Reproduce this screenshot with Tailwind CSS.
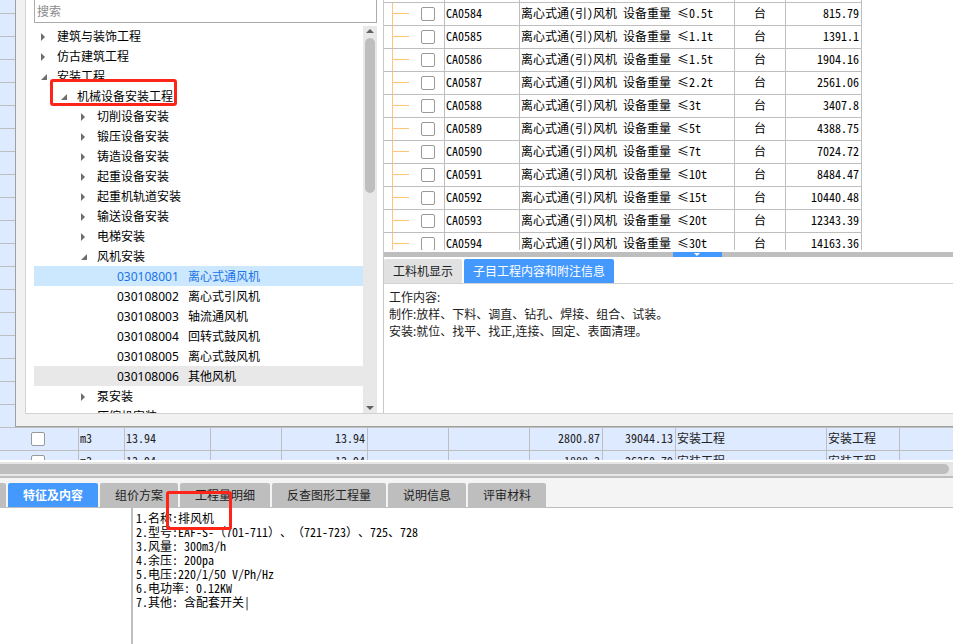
<!DOCTYPE html>
<html lang="zh-CN">
<head>
<meta charset="utf-8">
<title>安装工程清单</title>
<script src="https://cdn.jsdelivr.net/npm/@tailwindcss/browser@4"></script>
</head>
<body class="h-screen flex flex-col overflow-hidden bg-white text-black text-[12px] font-['Noto_Sans','Noto_Sans_CJK_SC',sans-serif]">

<main class="flex-1 min-h-0 flex">
  <div id="stripe" class="w-[15px] flex-none overflow-hidden bg-[#deeaff]"></div>
  <section class="flex-1 min-w-0 flex flex-col bg-[#f1f1f1] border-l border-b border-[#a0a0a0] pl-[9px] pb-[12px]">
    <div class="flex-1 min-h-0 flex bg-white border-l border-b border-[#d2d2d2]">
      <div class="relative w-[357px] flex-none flex flex-col pl-[8px] pr-[6px]">
        <input type="text" aria-label="搜索" placeholder="搜索" class="h-[23px] flex-none w-full border border-t-0 border-[#ababab] px-[2px] leading-[22px] outline-none placeholder:text-[#8a8a8a]">
        <div class="flex-1 min-h-0 flex pt-[3px]">
          <ul id="tree" class="flex-1 min-w-0 overflow-hidden"></ul>
          <div class="w-[14px] flex-none bg-[#e8e8e8] flex flex-col items-center justify-between pt-[3px] pb-[3px]">
            <div class="flex flex-col items-center">
              <svg class="w-[8px] h-[4px]" viewBox="0 0 8 4"><path d="M0 4 4 0 8 4z" fill="#606068"/></svg>
              <div class="mt-[5px] w-[10px] h-[155px] rounded-full bg-[#bebebe]"></div>
            </div>
            <svg class="w-[8px] h-[4px]" viewBox="0 0 8 4"><path d="M0 0 4 4 8 0z" fill="#606068"/></svg>
          </div>
        </div>
        <div class="absolute left-[24px] top-[79px] w-[127px] h-[27px] border-3 border-[#ff2418] rounded-[3px]"></div>
      </div>
      <div class="flex-1 min-w-0 flex flex-col border-l border-[#c8c8c8]">
        <div class="flex-1 min-h-0 overflow-hidden">
          <table class="w-[478px] table-fixed border-separate border-spacing-0 font-['Noto_Sans_Mono_CJK_SC','Noto_Sans_CJK_SC',monospace]">
            <colgroup><col class="w-[61px]"><col class="w-[75px]"><col class="w-[215px]"><col class="w-[51px]"><col class="w-[76px]"></colgroup>
            <tbody id="quota"></tbody>
          </table>
        </div>
        <div class="mt-[2px] h-[5px] flex-none bg-[#bebebe] flex justify-center">
          <button aria-label="折叠" class="w-[49px] mr-[-57px] bg-[#4499ff] flex justify-center items-center"><svg class="w-[6px] h-[3px]" viewBox="0 0 6 3"><path d="M0 0 3 3 6 0z" fill="#fff"/></svg></button>
        </div>
        <div class="mt-[2px] flex-none flex gap-[2px] border-b border-[#d2d2d2] leading-[22px]">
          <button class="h-[24px] px-[9px] pt-[2px] bg-[#e1e1e1] text-[#222] rounded-t-[2px]">工料机显示</button>
          <button class="h-[24px] px-[9px] pt-[2px] bg-[#4499ff] text-white rounded-t-[2px]">子目工程内容和附注信息</button>
        </div>
        <div class="h-[129px] flex-none pt-[5px] pl-[5px] leading-[17px] text-[#222]">
          <p>工作内容:</p>
          <p>制作:放样、下料、调直、钻孔、焊接、组合、试装。</p>
          <p>安装:就位、找平、找正,连接、固定、表面清理。</p>
        </div>
      </div>
    </div>
  </section>
</main>

<div class="h-[33px] flex-none overflow-hidden bg-[#deeaff]">
  <table class="w-full table-fixed border-separate border-spacing-0 text-[#222] font-['Noto_Sans_Mono_CJK_SC','Noto_Sans_CJK_SC',monospace]">
    <colgroup><col class="w-[79px]"><col class="w-[46px]"><col class="w-[86px]"><col class="w-[71px]"><col class="w-[86px]"><col class="w-[81px]"><col class="w-[81px]"><col class="w-[73px]"><col class="w-[73px]"><col class="w-[151px]"><col class="w-[73px]"><col></colgroup>
    <tbody id="bill"></tbody>
  </table>
</div>
<div class="mt-[2px] h-[14px] flex-none bg-[#e6e6e6] pt-[2px] pb-[2px] pr-[4px]"><div class="h-full rounded-r-full bg-[#bebebe]"></div></div>

<section class="h-[168px] flex-none flex flex-col border-t-2 border-[#bebebe]">
  <div class="flex-none flex gap-[2px] pt-[5px] bg-[#f4f4f4] border-b border-[#bebebe] text-[#222] leading-[22px]">
    <div class="w-[6px] bg-[#bebebe] rounded-tr-[2px]"></div>
    <button class="h-[24px] px-[15px] pt-[2px] rounded-t-[2px] bg-[#4499ff] text-white font-bold">特征及内容</button>
    <button class="h-[24px] px-[15px] pt-[2px] rounded-t-[2px] bg-[#bebebe]">组价方案</button>
    <button class="h-[24px] px-[15px] pt-[2px] rounded-t-[2px] bg-[#bebebe]">工程量明细</button>
    <button class="h-[24px] px-[15px] pt-[2px] rounded-t-[2px] bg-[#bebebe]">反查图形工程量</button>
    <button class="h-[24px] px-[15px] pt-[2px] rounded-t-[2px] bg-[#bebebe]">说明信息</button>
    <button class="h-[24px] px-[15px] pt-[2px] rounded-t-[2px] bg-[#bebebe]">评审材料</button>
  </div>
  <div class="flex-1 min-h-0 flex">
    <div class="w-[131px] flex-none"></div>
    <div class="relative flex-1 border-l-2 border-[#bebebe] flex">
      <textarea aria-label="特征及内容" class="flex-1 resize-none outline-none overflow-hidden pt-[3px] pl-[3px] leading-[14px] text-[12px] [text-spacing-trim:space-all] font-['Noto_Sans_Mono_CJK_SC','Noto_Sans_CJK_SC',monospace]">1.名称:排风机
2.型号:EAF-S-（701-711）、（721-723）、725、728
3.风量: 300m3/h
4.余压: 200pa
5.电压:220/1/50 V/Ph/Hz
6.电功率: 0.12KW
7.其他: 含配套开关|</textarea>
      <div class="absolute left-[33px] top-[-17px] w-[66px] h-[39px] border-3 border-[#ff2418] rounded-[3px]"></div>
    </div>
  </div>
</section>

<script>
const box = label => `<input type="checkbox" aria-label="${label}" class="block appearance-none w-[14px] h-[14px] bg-white border border-[#999] rounded-[2px]">`;

document.getElementById('stripe').innerHTML =
  '<div class="h-[14px] border-b border-[#bebebe]"></div>' +
  '<div class="h-[23px] border-b border-[#bebebe]"></div>'.repeat(18);

const pads = ['pl-[6px]', 'pl-[26px]', 'pl-[46px]', 'pl-[66px]'];
const closed = '<svg class="w-[17px] h-[8px]" viewBox="0 0 17 8"><path d="M1 0 5 4 1 8z" fill="#6e6e6e"/></svg>';
const opened = '<svg class="w-[17px] h-[8px]" viewBox="0 0 17 8"><path d="M7 1v6H1z" fill="#6e6e6e"/></svg>';
const blank = '<span class="w-[17px]"></span>';
const tree = [
  [0, closed, '建筑与装饰工程'], [0, closed, '仿古建筑工程'], [0, opened, '安装工程'],
  [1, opened, '机械设备安装工程'],
  [2, closed, '切削设备安装'], [2, closed, '锻压设备安装'], [2, closed, '铸造设备安装'],
  [2, closed, '起重设备安装'], [2, closed, '起重机轨道安装'], [2, closed, '输送设备安装'],
  [2, closed, '电梯安装'], [2, opened, '风机安装'],
  [3, blank, '离心式通风机', '030108001', 'bg-[#cce8ff] text-[#1a73e8]'],
  [3, blank, '离心式引风机', '030108002'], [3, blank, '轴流通风机', '030108003'],
  [3, blank, '回转式鼓风机', '030108004'], [3, blank, '离心式鼓风机', '030108005'],
  [3, blank, '其他风机', '030108006', 'bg-[#e8e8e8]'],
  [2, closed, '泵安装'], [2, closed, '压缩机安装']
];
document.getElementById('tree').innerHTML = tree.map(([d, icon, name, code, tone]) =>
  `<li class="h-[20px] pt-[2px] leading-[18px] flex items-center whitespace-nowrap ${pads[d]} ${tone || ''}">${icon}${code ? `<span class="w-[71px]">${code}</span>` : ''}<span>${name}</span></li>`).join('');

const quota = [['84','0.5t','815.79'],['85','1.1t','1391.1'],['86','1.5t','1904.16'],['87','2.2t','2561.06'],
  ['88','3t','3407.8'],['89','5t','4388.75'],['90','7t','7024.72'],['91','10t','8484.47'],
  ['92','15t','10440.48'],['93','20t','12343.39'],['94','30t','14163.36']];
const cell = 'h-[23px] p-0 align-top border-t border-r border-[#bebebe] leading-[20px] whitespace-nowrap overflow-hidden';
document.getElementById('quota').innerHTML =
  '<tr>' + '<td class="h-[2px] p-0 border-r border-[#bebebe]"></td>'.repeat(5) + '</tr>' +
  quota.map(([n, w, p]) => `<tr>
    <td class="${cell}"><div class="flex items-start h-[22px] pl-[8px]"><span class="self-stretch w-px bg-[#ffc67a]"></span><span class="w-[16px] h-px mt-[10px] bg-[#ffc67a] mr-[12px]"></span><span class="pt-[4px]">${box('CA05' + n)}</span></div></td>
    <td class="${cell} pl-[1px]">CA05${n}</td>
    <td class="${cell} pl-[1px]">离心式通(引)风机 设备重量 ≤${w}</td>
    <td class="${cell} text-center">台</td>
    <td class="${cell} text-right pr-[2px]">${p}</td></tr>`).join('');

document.getElementById('bill').innerHTML = [
  ['m3','13.94','13.94','2800.87','39044.13'], ['m3','13.94','13.94','1888.3','26350.79']
].map(([u, q, e, p, t], i) => `<tr>
  <td class="${cell}"><div class="pl-[31px] pt-[4px]">${box('清单行 ' + (i + 1))}</div></td>
  <td class="${cell} pl-[1px]">${u}</td><td class="${cell} pl-[1px]">${q}</td><td class="${cell}"></td>
  <td class="${cell} text-right pr-[2px]">${e}</td><td class="${cell}"></td><td class="${cell}"></td>
  <td class="${cell} text-right pr-[2px]">${p}</td><td class="${cell} text-right pr-[2px]">${t}</td>
  <td class="${cell} pl-[1px]">安装工程</td><td class="${cell} pl-[1px]">安装工程</td><td class="${cell} border-r-0"></td></tr>`).join('');
</script>
</body>
</html>
